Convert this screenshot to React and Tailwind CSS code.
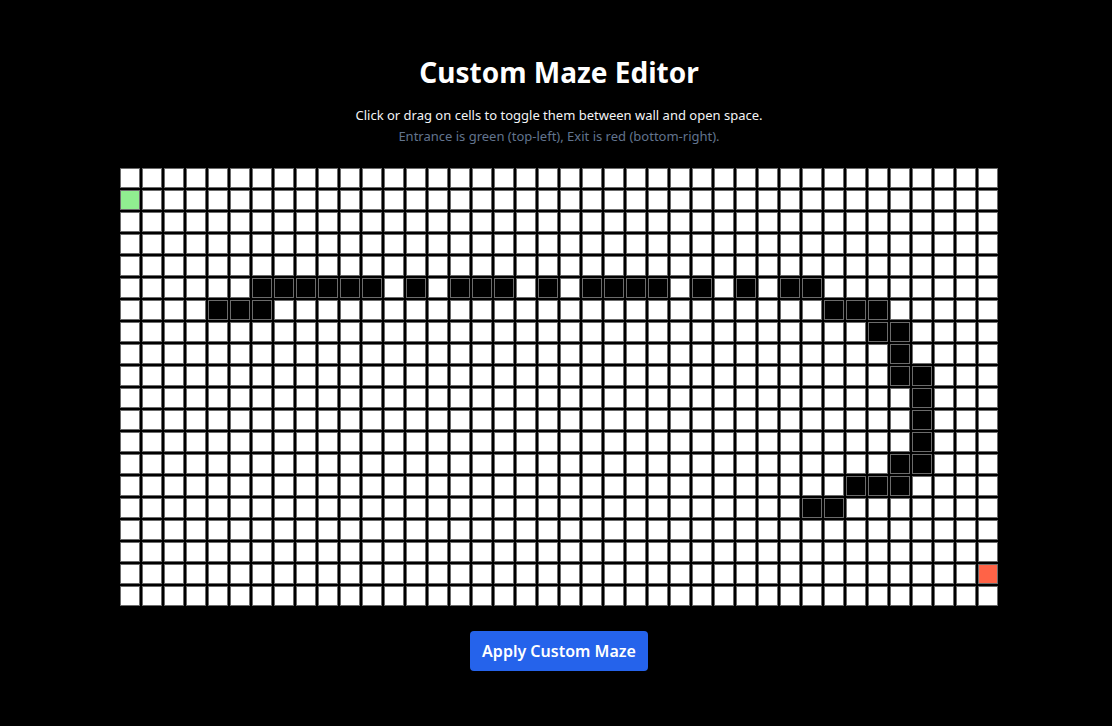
import { useState } from 'react';

const COLS = 40;
const ROWS = 20;

const WALLS = {
  5: [6, 7, 8, 9, 10, 11, 13, 15, 16, 17, 19, 21, 22, 23, 24, 26, 28, 30, 31],
  6: [4, 5, 6, 32, 33, 34],
  7: [34, 35],
  8: [35],
  9: [35, 36],
  10: [36],
  11: [36],
  12: [36],
  13: [35, 36],
  14: [33, 34, 35],
  15: [31, 32],
};

function buildGrid() {
  const grid = [];
  for (let r = 0; r < ROWS; r++) {
    const row = [];
    for (let c = 0; c < COLS; c++) {
      row.push((WALLS[r] || []).includes(c));
    }
    grid.push(row);
  }
  return grid;
}

export default function App() {
  const [grid, setGrid] = useState(buildGrid);
  const [dragging, setDragging] = useState(false);

  const toggle = (r, c) => {
    setGrid(g => g.map((row, ri) => (ri === r ? row.map((v, ci) => (ci === c ? !v : v)) : row)));
  };

  return (
    <div
      className="min-h-screen bg-black flex flex-col items-center pt-[54px] pl-[6px] font-['Noto_Sans',sans-serif]"
      onMouseUp={() => setDragging(false)}
    >
      <h1 className="text-[28px] font-bold text-white leading-9">Custom Maze Editor</h1>
      <p className="mt-[15px] text-[13px] text-gray-100 leading-5">
        Click or drag on cells to toggle them between wall and open space.
      </p>
      <p className="mt-px text-[13px] text-slate-500 leading-5">
        Entrance is green (top-left), Exit is red (bottom-right).
      </p>

      <div className="mt-[22px] grid grid-cols-[repeat(40,20px)] gap-[2px] select-none">
        {grid.map((row, r) =>
          row.map((wall, c) => {
            const entrance = r === 1 && c === 0;
            const exit = r === 18 && c === 39;
            let bg = wall ? 'bg-black' : 'bg-white';
            if (entrance) bg = 'bg-[#90ee90]';
            if (exit) bg = 'bg-[#ff6347]';
            return (
              <div
                key={`${r}-${c}`}
                className={`w-5 h-5 border border-[#6b6b6b] cursor-pointer ${bg}`}
                onMouseDown={() => {
                  if (entrance || exit) return;
                  setDragging(true);
                  toggle(r, c);
                }}
                onMouseEnter={() => {
                  if (dragging && !entrance && !exit) toggle(r, c);
                }}
              />
            );
          })
        )}
      </div>

      <button className="mt-[25px] h-10 px-3 rounded bg-[#2563eb] text-white text-base font-semibold hover:bg-blue-700">
        Apply Custom Maze
      </button>
    </div>
  );
}
